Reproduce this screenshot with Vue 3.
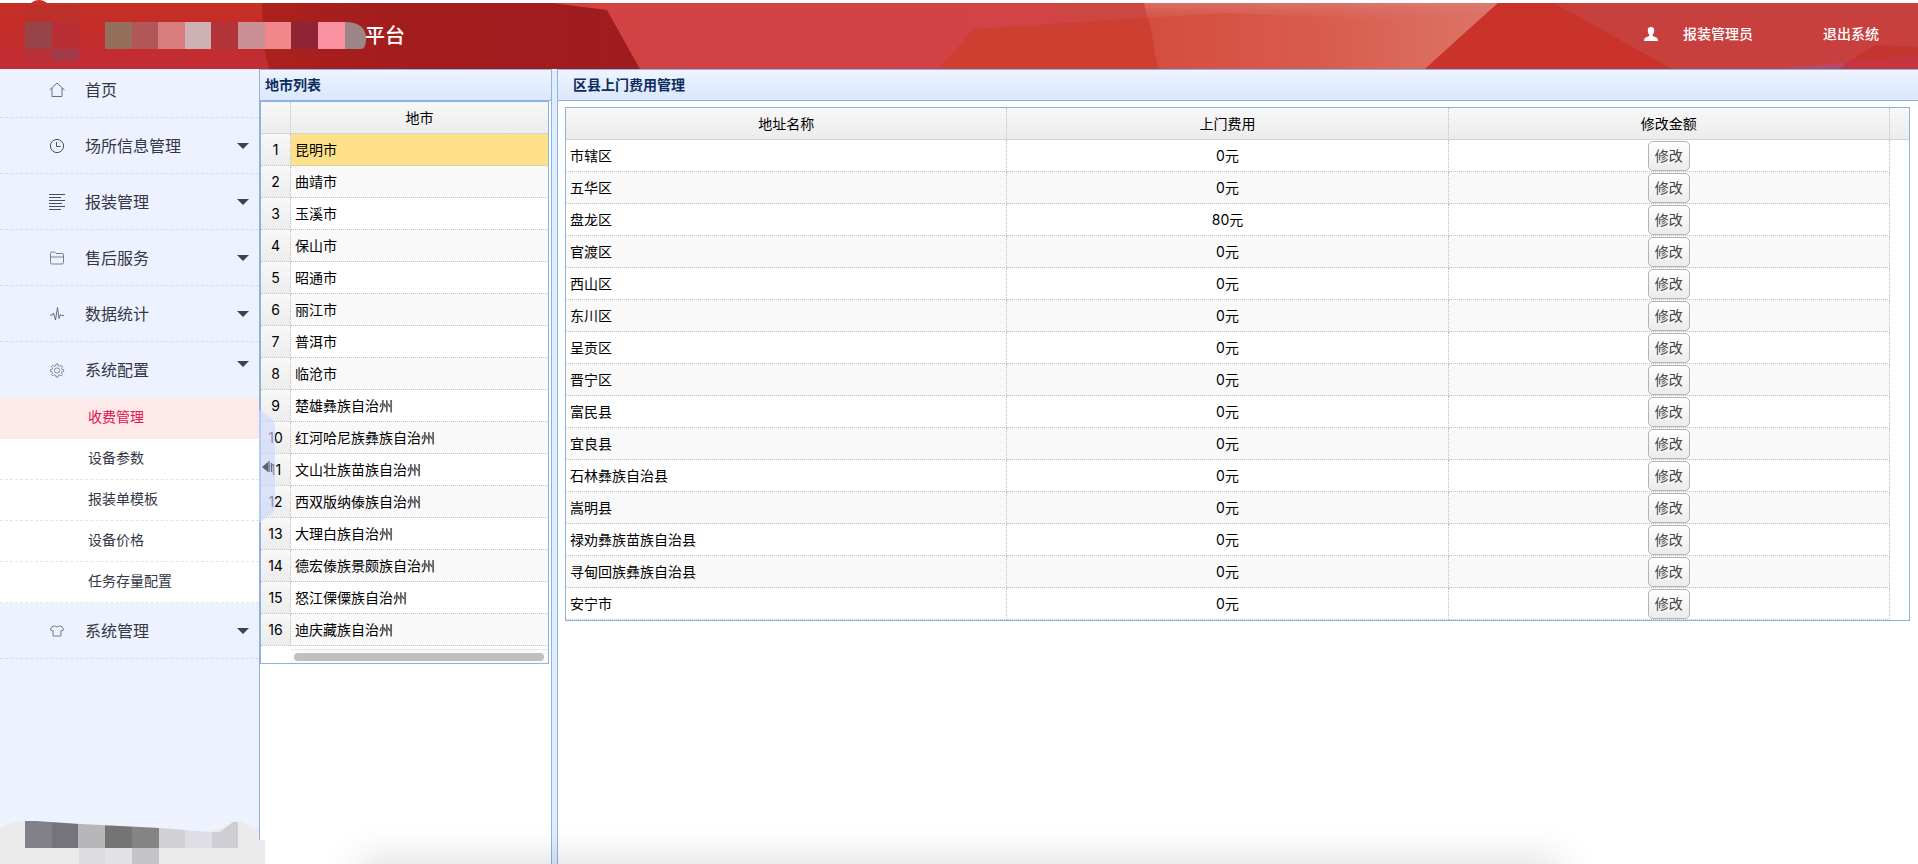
<script setup>
import { ref } from 'vue'

const menu = [
  { label: '首页', icon: 'home' },
  { label: '场所信息管理', icon: 'clock', arrow: true },
  { label: '报装管理', icon: 'lines', arrow: true },
  { label: '售后服务', icon: 'folder', arrow: true },
  { label: '数据统计', icon: 'pulse', arrow: true },
  {
    label: '系统配置',
    icon: 'gear',
    arrow: true,
    open: true,
    children: ['收费管理', '设备参数', '报装单模板', '设备价格', '任务存量配置'],
  },
  { label: '系统管理', icon: 'shirt', arrow: true },
]
const activeItem = ref('收费管理')

const cities = [
  '昆明市', '曲靖市', '玉溪市', '保山市', '昭通市', '丽江市', '普洱市', '临沧市',
  '楚雄彝族自治州', '红河哈尼族彝族自治州', '文山壮族苗族自治州', '西双版纳傣族自治州',
  '大理白族自治州', '德宏傣族景颇族自治州', '怒江傈僳族自治州', '迪庆藏族自治州',
]
const selectedCity = ref('昆明市')

const districts = [
  '市辖区', '五华区', '盘龙区', '官渡区', '西山区', '东川区', '呈贡区', '晋宁区',
  '富民县', '宜良县', '石林彝族自治县', '嵩明县', '禄劝彝族苗族自治县',
  '寻甸回族彝族自治县', '安宁市',
].map((name) => ({ name, fee: name === '盘龙区' ? '80元' : '0元' }))

const titleBlocks = [
  '#94705c', '#b25759', '#d87d7d', '#cdb1b5', '#b23438', '#cb8f96', '#f1868b', '#912434', '#f992a0',
]
const footBlocks = ['#82818a', '#75747d', '#b7b7b9', '#747475', '#848485', '#d1d1d3', '#dfdee5']
</script>

<template>
  <div class="app">
    <header class="top">
      <svg class="top-bg" viewBox="0 0 1918 66" preserveAspectRatio="none" aria-hidden="true">
        <defs>
          <linearGradient id="gl" x1="0" y1="0" x2="0" y2="1">
            <stop offset="0" stop-color="#c63026" /><stop offset="0.35" stop-color="#c42d28" /><stop offset="1" stop-color="#c22d35" />
          </linearGradient>
          <linearGradient id="gd" x1="0" y1="0" x2="1" y2="0">
            <stop offset="0" stop-color="#ab221d" /><stop offset="0.25" stop-color="#a51d1d" /><stop offset="1" stop-color="#9e1c1f" />
          </linearGradient>
          <linearGradient id="gm" x1="0" y1="0" x2="1" y2="0">
            <stop offset="0" stop-color="#d34243" /><stop offset="1" stop-color="#d04348" />
          </linearGradient>
          <linearGradient id="go" x1="0" y1="0" x2="1" y2="0">
            <stop offset="0" stop-color="#d44d3f" /><stop offset="0.5" stop-color="#d85c4c" /><stop offset="1" stop-color="#dd7568" />
          </linearGradient>
          <linearGradient id="gt" x1="0" y1="0" x2="0" y2="1">
            <stop offset="0" stop-color="#dc7c78" stop-opacity="0.7" /><stop offset="1" stop-color="#d96a60" stop-opacity="0" />
          </linearGradient>
        </defs>
        <rect width="1918" height="66" fill="url(#gl)" />
        <rect x="540" width="660" height="66" fill="url(#gm)" />
        <polygon points="262,0 552,0 607,7 640,66 269,66 264,46" fill="url(#gd)" />
        <polygon points="939,66 973,26 1080,19 1150,14 1170,66" fill="#ce3f31" />
        <polygon points="1045,0 1080,19 1160,13 1160,0" fill="#cd4741" />
        <polygon points="1144,0 1498,0 1425,66 1158,66 1150,20" fill="url(#go)" />
        <polygon points="1144,0 1498,0 1477,20 1225,10 1147,15" fill="url(#gt)" />
        <polygon points="1498,0 1425,66 1690,66 1560,0" fill="#c93329" />
        <polygon points="1554,0 1918,0 1918,66 1672,66" fill="#c7403e" />
        <polygon points="1848,59 1875,42 1918,44 1918,66 1840,66" fill="#c6342f" />
        <polygon points="1772,66 1848,59 1840,66" fill="#b84863" />
        <polygon points="1840,66 1848,59 1918,52 1918,66" fill="#c5353e" />
      </svg>
      <svg class="mosaic" width="370" height="66" aria-hidden="true">
        <circle cx="39" cy="9" r="12" fill="#c9302a" />
        <rect x="25" y="2" width="54" height="17" fill="#bd3029" />
        <rect x="25" y="19" width="27" height="27" fill="#964447" />
        <rect x="52" y="19" width="27" height="27" fill="#b92d35" />
        <path d="M25 46h27v14h-22q-5 0-5-5z" fill="#b93039" />
        <path d="M52 46h27v9q0 3-3 3H52z" fill="#a33a49" />
        <rect v-for="(c, i) in titleBlocks" :key="i" :x="105 + Math.round(i * 26.6)" y="19" width="27" height="27" :fill="c" />
        <path d="M345 19q21 0 21 17q0 8-4 10h-17z" fill="#9c8587" />
      </svg>
      <h1 class="brand">平台</h1>
      <div class="account">
        <svg width="14" height="14" viewBox="0 0 14 14" aria-hidden="true">
          <path d="M7 0C4.700 0 3.600 1.600 3.800 3.900C4 5.800 4.700 6.800 5.300 7.500V9L1.600 10.500Q0 11.200 0 14H14Q14 11.200 12.400 10.500L8.700 9V7.500C9.300 6.800 10 5.800 10.200 3.900C10.400 1.600 9.300 0 7 0Z" fill="#fff" />
        </svg>
        <span>报装管理员</span>
      </div>
      <a class="logout" href="#">退出系统</a>
    </header>

    <div class="body">
      <aside class="side">
        <nav>
          <template v-for="m in menu" :key="m.label">
            <a class="item" :class="{ open: m.open }" href="#">
              <svg class="icon" width="16" height="16" viewBox="0 0 16 16" fill="none" stroke="#4a4e5c" aria-hidden="true">
                <path v-if="m.icon === 'home'" d="M.5 8L8 1L15.500 8M3 6V14.500H13V6" stroke-width=".8" />
                <template v-else-if="m.icon === 'clock'">
                  <circle cx="8" cy="8" r="6.600" /><path d="M7.500 4V8.500H11.500" />
                </template>
                <path v-else-if="m.icon === 'lines'" d="M0 .5H16M0 3.500H12M0 6.500H16M0 9.500H13M0 12.500H16M0 15.500H12" />
                <path v-else-if="m.icon === 'folder'" d="M1.500 12.500V3.500Q1.500 2 3 2H5.500L7 3.500H13Q14.500 3.500 14.500 5V12.500Q14.500 14 13 14H3Q1.500 14 1.500 12.500ZM1.500 7H14.500" stroke-width=".7" />
                <path v-else-if="m.icon === 'pulse'" d="M1 9H3.500L4.500 7L6.500 14L8.500 1.500L10 12.500L11.500 8.500L12.500 9.500H15" stroke-width=".8" />
                <template v-else-if="m.icon === 'gear'">
                  <circle cx="8" cy="8.500" r="2.600" stroke-width=".6" />
                  <path d="M7 2H9L9.300 3.900L10.600 4.400L12.100 3.200L13.500 4.600L12.400 6.200L12.900 7.400L14.700 7.600V9.500L12.900 9.800L12.400 11L13.500 12.500L12.100 13.900L10.600 12.800L9.300 13.300L9 15.100H7L6.700 13.300L5.400 12.800L3.900 13.900L2.500 12.500L3.600 11L3.100 9.800L1.300 9.500V7.600L3.100 7.400L3.600 6.200L2.500 4.600L3.900 3.200L5.400 4.400L6.700 3.900Z" stroke-width=".6" />
                </template>
                <path v-else d="M5.500 3Q8 5 10.500 3L13 3.500L14.700 7L12.500 8L12 7.500V13H4V7.500L3.500 8L1.300 7L3 3.500Z" stroke-width=".7" />
              </svg>
              <span>{{ m.label }}</span>
              <i v-if="m.arrow" class="caret"></i>
            </a>
            <div v-if="m.children" class="sub">
              <a
                v-for="c in m.children"
                :key="c"
                href="#"
                :class="{ active: c === activeItem }"
                @click.prevent="activeItem = c"
              >{{ c }}</a>
            </div>
          </template>
        </nav>
        <svg class="foot" width="265" height="44" aria-hidden="true">
          <path d="M0 9Q10 1 25 1L110 6L210 12L235 2Q245 0 252 8H259V20H265V44H0Z" fill="#ebebeb" />
          <clipPath id="fc"><path d="M25 1H36L80 4L160 8L210 12H220L233 2H238V44H25Z" /></clipPath>
          <g clip-path="url(#fc)">
            <rect v-for="(c, i) in footBlocks" :key="i" :x="25 + Math.round(i * 26.700)" y="0" width="27" height="28" :fill="c" />
            <rect x="212" y="0" width="26" height="28" fill="#cecdd4" />
          </g>
          <rect x="79" y="28" width="26" height="16" fill="#dcdcde" />
          <rect x="105" y="28" width="27" height="16" fill="#e2e2e4" />
          <rect x="132" y="28" width="27" height="16" fill="#c5c5c7" />
        </svg>
        <button class="handle" type="button" aria-label="收起菜单">
          <svg width="16" height="113" viewBox="0 0 16 113" aria-hidden="true">
            <path d="M0 0L12 8Q16 11 16 16V97Q16 101 12 104L0 113Z" fill="#cbd9fb" fill-opacity=".65" />
            <path d="M3 57L9 52V62Z" fill="#5c6070" />
            <path d="M10 51V62M12.500 53V62" stroke="#6a6e7c" stroke-width="1.400" />
          </svg>
        </button>
      </aside>

      <section class="panel west">
        <h2>地市列表</h2>
        <div class="grid cities">
          <table>
            <colgroup><col class="num-col" /><col /></colgroup>
            <thead><tr><th></th><th>地市</th></tr></thead>
            <tbody>
              <tr
                v-for="(c, i) in cities"
                :key="c"
                :class="{ selected: c === selectedCity }"
                @click="selectedCity = c"
              >
                <td class="num">{{ i + 1 }}</td>
                <td>{{ c }}</td>
              </tr>
            </tbody>
          </table>
          <div class="track"><div class="thumb"></div></div>
        </div>
      </section>

      <div class="split"></div>

      <section class="panel main">
        <h2>区县上门费用管理</h2>
        <div class="grid fees">
          <table>
            <colgroup><col /><col /><col /><col class="rest-col" /></colgroup>
            <thead>
              <tr><th>地址名称</th><th>上门费用</th><th>修改金额</th><th class="rest"></th></tr>
            </thead>
            <tbody>
              <tr v-for="d in districts" :key="d.name">
                <td>{{ d.name }}</td>
                <td class="mid">{{ d.fee }}</td>
                <td class="mid act"><button type="button">修改</button></td>
                <td class="rest"></td>
              </tr>
            </tbody>
          </table>
        </div>
      </section>
      <div class="shade"><div></div></div>
    </div>
  </div>
</template>

<style>
body {
  margin: 0;
}
</style>

<style scoped>
.app {
  display: flex;
  flex-direction: column;
  height: 100vh;
  overflow: hidden;
  background: #fff;
  color: #000;
  font-family: Inter, "Noto Sans CJK SC", sans-serif;
  font-size: 14px;
}
a {
  color: inherit;
  text-decoration: none;
}
.top {
  position: relative;
  z-index: 3;
  display: flex;
  align-items: center;
  flex: none;
  height: 66px;
  margin-top: 3px;
  padding-right: 39px;
  color: #fff;
  font-weight: 500;
}
.top-bg {
  position: absolute;
  inset: 0;
  width: 100%;
  height: 100%;
}
.mosaic {
  position: absolute;
  left: 0;
  top: 0;
  overflow: visible;
}
.brand {
  position: relative;
  flex: 1;
  margin: 0;
  padding-left: 365px;
  font-size: 20px;
  font-weight: 500;
  line-height: 28px;
}
.account {
  position: relative;
  display: flex;
  align-items: center;
  gap: 25px;
  margin-right: 70px;
  padding-bottom: 4px;
  line-height: 20px;
}
.logout {
  position: relative;
  padding-bottom: 4px;
  line-height: 20px;
}
.body {
  position: relative;
  display: flex;
  flex: 1;
  min-height: 0;
}
.side {
  position: relative;
  z-index: 2;
  flex: none;
  width: 259px;
  background: #eef2fe;
  color: #333745;
}
nav {
  margin-top: -7px;
}
.item {
  display: flex;
  align-items: center;
  box-sizing: border-box;
  height: 56px;
  padding: 0 10px 0 49px;
  border-bottom: 1px dashed #d8dce8;
  font-size: 16px;
  line-height: 24px;
}
.icon {
  flex: none;
  margin-right: 20px;
}
.item.open {
  border-bottom: 0;
}
.caret {
  margin-left: auto;
  border: 6px solid transparent;
  border-top-color: #3d4150;
  border-bottom: 0;
}
.open .caret {
  margin-bottom: 12px;
}
.sub a {
  display: block;
  box-sizing: border-box;
  height: 41px;
  padding-left: 88px;
  border-bottom: 1px dashed #e4e5ea;
  background: #fff;
  line-height: 38px;
}
.sub a.active {
  background: #fde8ea;
  border-bottom-color: #fde8ea;
  color: #e0134a;
}
.foot {
  position: absolute;
  left: 0;
  bottom: 0;
}
.handle {
  position: absolute;
  left: 259px;
  top: 341px;
  width: 16px;
  height: 113px;
  padding: 0;
  border: 0;
  background: none;
}
.handle svg {
  display: block;
}
.panel {
  box-sizing: border-box;
  border: 1px solid #8db2e3;
  border-bottom: 0;
  background: #fff;
}
.west {
  flex: none;
  width: 293px;
}
.main {
  flex: 1;
  min-width: 0;
  border-right: 0;
}
.split {
  flex: none;
  width: 5px;
  background: #e0ecff;
}
h2 {
  margin: 0;
  padding: 0 5px;
  border-bottom: 1px solid #8db2e3;
  background: linear-gradient(#eef4ff, #dae7fd);
  color: #0e2d5f;
  font-size: 14px;
  font-weight: 700;
  line-height: 30px;
}
.main h2 {
  padding: 0 15px;
}
.grid {
  border: 1px solid #8fb2dc;
}
.cities {
  margin-right: 2px;
}
.fees {
  margin: 6px 8px 0 7px;
}
table {
  width: 100%;
  border-collapse: separate;
  border-spacing: 0;
  table-layout: fixed;
}
.num-col {
  width: 30px;
}
.rest-col {
  width: 19px;
}
th,
td {
  box-sizing: border-box;
  height: 32px;
  padding: 0 4px;
  border-right: 1px dotted #c0c0c0;
  border-bottom: 1px dotted #c0c0c0;
  line-height: 20px;
  text-align: left;
  white-space: nowrap;
}
th {
  border-bottom: 1px solid #d4d4d4;
  background: linear-gradient(#f8f8f8, #ececec);
  font-weight: 400;
  text-align: center;
}
tbody tr:nth-child(even) td {
  background: #f9f9f9;
}
th:last-child,
td:last-child {
  border-right: 0;
}
td.num {
  background: linear-gradient(#f8f8f8, #ececec);
  text-align: center;
}
tbody tr:nth-child(even) td.num {
  background: linear-gradient(#f8f8f8, #ececec);
}
tbody tr.selected td:not(.num) {
  background: #ffe08a;
}
td.rest,
tbody tr:nth-child(even) td.rest {
  border-bottom: 0;
  background: #fff;
}
.mid {
  text-align: center;
}
.act {
  padding: 0;
}
.act button {
  display: block;
  box-sizing: border-box;
  height: 30px;
  margin: 0 auto;
  padding: 0 6px;
  border: 1px solid #b4b4b4;
  border-radius: 5px;
  background: linear-gradient(#fff, #ececec);
  color: #444;
  font: inherit;
  line-height: 28px;
}
.track {
  box-sizing: border-box;
  height: 14px;
  margin: 3px 0 0 30px;
  padding: 3px 4px 0 3px;
  border-top: 1px solid #e8e8e8;
  background: #fafafa;
}
.thumb {
  height: 8px;
  border-radius: 4px;
  background: #c0c0c0;
}
.shade {
  position: absolute;
  left: 300px;
  right: 300px;
  bottom: 0;
  height: 44px;
  overflow: hidden;
  pointer-events: none;
}
.shade div {
  height: 20px;
  margin: 46px 60px 0;
  box-shadow: 0 0 40px 0 rgba(0, 0, 0, 0.24);
}
</style>
